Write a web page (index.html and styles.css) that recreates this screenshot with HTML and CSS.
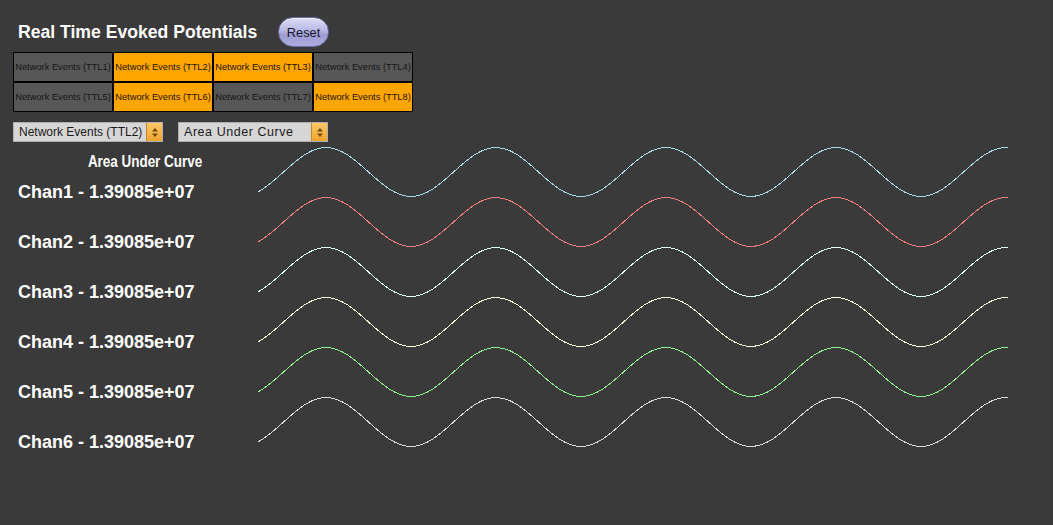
FILE: index.html
```html
<!DOCTYPE html>
<html lang="en">
<head>
<meta charset="utf-8">
<title>Real Time Evoked Potentials</title>
<link rel="stylesheet" href="styles.css">
</head>
<body>
<div class="app">
  <header class="top">
    <h1 class="title">Real Time Evoked Potentials</h1>
    <button class="reset">Reset</button>
  </header>

  <div class="tabs">
    <div class="tab">Network Events (TTL1)</div>
    <div class="tab on">Network Events (TTL2)</div>
    <div class="tab on">Network Events (TTL3)</div>
    <div class="tab">Network Events (TTL4)</div>
    <div class="tab">Network Events (TTL5)</div>
    <div class="tab on">Network Events (TTL6)</div>
    <div class="tab">Network Events (TTL7)</div>
    <div class="tab on">Network Events (TTL8)</div>
  </div>

  <div class="selects">
    <div class="select">
      <span class="select-text">Network Events (TTL2)</span>
      <span class="select-arrow"><svg width="8" height="11" viewBox="0 0 8 11"><path d="M4 1 L7 4.5 H1 Z M4 10 L7 6.5 H1 Z" class="arrow-glyph"/></svg></span>
    </div>
    <div class="select">
      <span class="select-text select-text--wide">Area Under Curve</span>
      <span class="select-arrow"><svg width="8" height="11" viewBox="0 0 8 11"><path d="M4 1 L7 4.5 H1 Z M4 10 L7 6.5 H1 Z" class="arrow-glyph"/></svg></span>
    </div>
  </div>

  <main class="main">
    <div class="labels">
      <div class="metric"><span class="metric-text">Area Under Curve</span></div>
      <ul class="chans">
        <li class="chan">Chan1 - 1.39085e+07</li>
        <li class="chan">Chan2 - 1.39085e+07</li>
        <li class="chan">Chan3 - 1.39085e+07</li>
        <li class="chan">Chan4 - 1.39085e+07</li>
        <li class="chan">Chan5 - 1.39085e+07</li>
        <li class="chan">Chan6 - 1.39085e+07</li>
      </ul>
    </div>
    <svg class="plot" viewBox="258 142 750 310" width="750" height="310">
      <defs>
        <path id="wave" d="M156,147.5 C187,147.5 210,196.5 241,196.5 S295,147.5 326,147.5 S380,196.5 411,196.5 S465,147.5 496,147.5 S550,196.5 581,196.5 S635,147.5 666,147.5 S720,196.5 751,196.5 S805,147.5 836,147.5 S890,196.5 921,196.5 S975,147.5 1006,147.5 S1060,196.5 1091,196.5"/>
      </defs>
      <use href="#wave" class="w w1"/>
      <use href="#wave" class="w w2" transform="translate(0,50)"/>
      <use href="#wave" class="w w3" transform="translate(0,100)"/>
      <use href="#wave" class="w w4" transform="translate(0,150)"/>
      <use href="#wave" class="w w5" transform="translate(0,200)"/>
      <use href="#wave" class="w w6" transform="translate(0,250)"/>
    </svg>
  </main>
</div>
</body>
</html>
```

FILE: styles.css
```css
html, body {
  margin: 0;
  padding: 0;
  background: #3a3a3a;
}

body {
  font-family: "Liberation Sans", Arial, sans-serif;
}

.app {
  width: 1053px;
  height: 525px;
  overflow: hidden;
}

.top {
  display: flex;
  align-items: center;
  height: 30px;
  padding-top: 17px;
}

.title {
  margin: 0 0 0 18px;
  width: 239px;
  white-space: nowrap;
  font-size: 17.6px;
  font-weight: bold;
  line-height: 30px;
  color: #ffffff;
}

.reset {
  margin-left: 21px;
  width: 51px;
  height: 30px;
  padding: 0;
  border: 1px solid #6c6ca4;
  border-radius: 15px;
  background: linear-gradient(#dcdcf6 0%, #b8b8e6 45%, #9c9cd2 60%, #acacde 100%);
  box-shadow: inset 0 1px 1px rgba(255, 255, 255, 0.6);
  font-family: "Liberation Sans", Arial, sans-serif;
  font-size: 12.8px;
  color: #18182a;
}

.tabs {
  display: grid;
  grid-template-columns: repeat(4, 100px);
  grid-auto-rows: 30px;
  width: 400px;
  margin: 5px 0 0 13px;
}

.tab {
  box-sizing: border-box;
  display: flex;
  align-items: center;
  justify-content: center;
  border: 1px solid #000000;
  background: #575757;
  color: #161616;
  font-size: 9.3px;
  white-space: nowrap;
  overflow: hidden;
}

.tab.on {
  background: #ffa500;
  color: #1a1200;
}

.selects {
  display: flex;
  gap: 15px;
  margin: 10px 0 0 13px;
}

.select {
  box-sizing: border-box;
  display: flex;
  width: 150px;
  height: 20px;
  border: 1px solid #b0b0b0;
  background: #d6d6d6;
}

.select-text {
  flex: 1;
  padding-left: 5px;
  font-size: 12px;
  line-height: 19px;
  color: #1a1a1a;
  white-space: nowrap;
}

.select-text--wide {
  font-size: 12.5px;
  letter-spacing: 0.55px;
}

.select-arrow {
  display: flex;
  align-items: center;
  justify-content: center;
  width: 15px;
  border-left: 1px solid #c4882c;
  background: linear-gradient(#fbc868, #f0a42a);
}

.arrow-glyph {
  fill: #6a4a10;
}

.main {
  display: flex;
}

.labels {
  width: 258px;
  flex: none;
}

.metric {
  width: 255px;
  margin: 10px 0 0 18px;
  text-align: center;
  font-weight: bold;
  font-size: 16px;
  line-height: 20px;
  color: #ffffff;
  white-space: nowrap;
}

.metric-text {
  display: inline-block;
  transform: scaleX(0.84);
  transform-origin: center;
}

.chans {
  display: flex;
  flex-direction: column;
  gap: 30px;
  list-style: none;
  margin: 10px 0 0 18px;
  padding: 0;
}

.chan {
  font-size: 18px;
  font-weight: bold;
  line-height: 20px;
  color: #ffffff;
  white-space: nowrap;
}

.plot {
  display: block;
  flex: none;
  width: 750px;
  height: 310px;
}

.plot path {
  fill: none;
}

.w {
  stroke-width: 1;
  shape-rendering: crispEdges;
}

.w1 { stroke: #add8e6; }
.w2 { stroke: #f08080; }
.w3 { stroke: #e0ffff; }
.w4 { stroke: #ffffe0; }
.w5 { stroke: #90ee90; }
.w6 { stroke: #dcdcdc; }
```
